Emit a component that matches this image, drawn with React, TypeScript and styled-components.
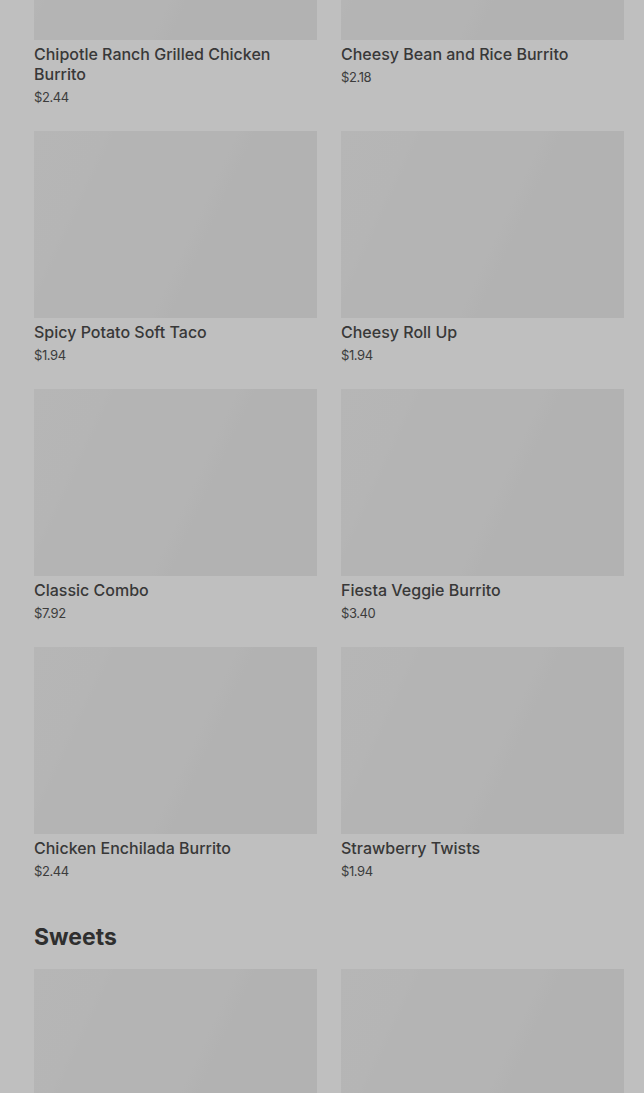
import React from "react";
import styled, { createGlobalStyle } from "styled-components";

const Global = createGlobalStyle`
  html, body { margin: 0; padding: 0; background: #bfbfbf; }
  body { font-family: Inter, "Noto Sans", "Liberation Sans", sans-serif; overflow: hidden; }
`;

const Page = styled.div`
  padding: 0 20px 0 34px;
  margin-top: -147px;
`;

const Section = styled.section`
  & + & { margin-top: 41px; }
`;

const Heading = styled.h2`
  margin: 0 0 16px;
  font-size: 23px;
  line-height: 32px;
  font-weight: 700;
  color: #2f2f2f;
`;

const Grid = styled.div`
  display: grid;
  grid-template-columns: 283px 283px;
  column-gap: 24px;
  row-gap: 25px;
`;

const Card = styled.div`
  display: flex;
  flex-direction: column;
`;

const Thumb = styled.div`
  height: 187px;
  background: linear-gradient(
    115deg,
    #b6b6b6 0%,
    #b5b5b5 20%,
    #b4b4b4 22%,
    #b4b4b4 55%,
    #b2b2b2 60%,
    #b2b2b2 100%
  );
`;

const Title = styled.div`
  margin-top: 4px;
  font-size: 16px;
  line-height: 20px;
  font-weight: 500;
  color: #383838;
`;

const Price = styled.div`
  margin-top: 4px;
  font-size: 13px;
  line-height: 18px;
  color: #3c3c3c;
  letter-spacing: -0.4px;
`;

type Item = { name: string; price: string };

const entrees: Item[] = [
  { name: "Chipotle Ranch Grilled Chicken Burrito", price: "$2.44" },
  { name: "Cheesy Bean and Rice Burrito", price: "$2.18" },
  { name: "Spicy Potato Soft Taco", price: "$1.94" },
  { name: "Cheesy Roll Up", price: "$1.94" },
  { name: "Classic Combo", price: "$7.92" },
  { name: "Fiesta Veggie Burrito", price: "$3.40" },
  { name: "Chicken Enchilada Burrito", price: "$2.44" },
  { name: "Strawberry Twists", price: "$1.94" },
];

const sweets: Item[] = [
  { name: "Cinnamon Twists", price: "$1.94" },
  { name: "Churros", price: "$2.18" },
];

const ItemCard = ({ item }: { item: Item }) => (
  <Card>
    <Thumb />
    <Title>{item.name}</Title>
    <Price>{item.price}</Price>
  </Card>
);

export default function App() {
  return (
    <>
      <Global />
      <Page>
        <Section>
          <Grid>
            {entrees.map((it) => (
              <ItemCard key={it.name} item={it} />
            ))}
          </Grid>
        </Section>
        <Section>
          <Heading>Sweets</Heading>
          <Grid>
            {sweets.map((it) => (
              <ItemCard key={it.name} item={it} />
            ))}
          </Grid>
        </Section>
      </Page>
    </>
  );
}
